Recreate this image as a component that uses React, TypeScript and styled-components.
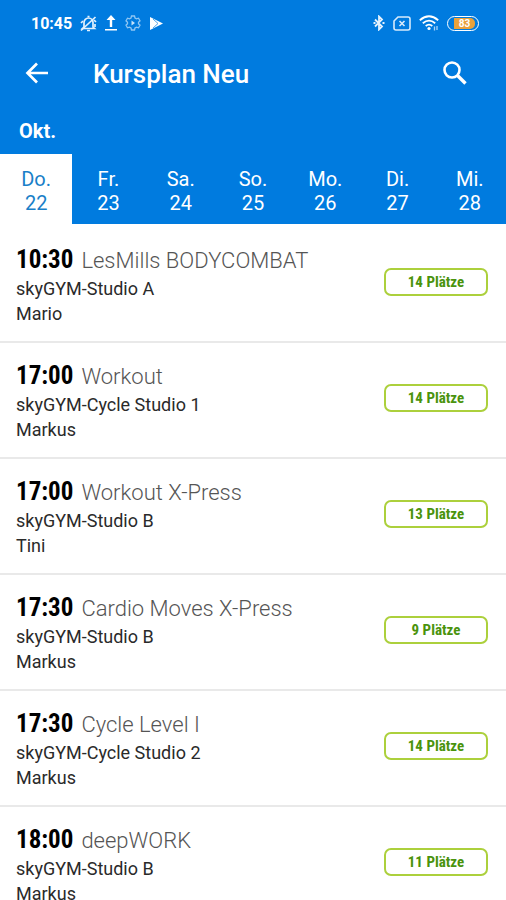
import React, { useState } from "react";
import styled, { createGlobalStyle } from "styled-components";

const blue = "#007bdf";

const GlobalStyle = createGlobalStyle`
  * { box-sizing: border-box; }
  html, body { margin: 0; height: 100%; overflow: hidden; background: #fff; }
  body { font-family: Roboto, "Liberation Sans", sans-serif; color: #2a2a2a; }
  #root { height: 100%; }
  button { font: inherit; border: 0; margin: 0; padding: 0; background: none; cursor: pointer; }
`;

const Screen = styled.div`
  height: 100vh;
  display: flex;
  flex-direction: column;
  overflow: hidden;
`;

const Header = styled.header`
  flex: none;
  background: ${blue};
  color: #fff;
`;

const StatusBar = styled.div`
  height: 44px;
  padding: 2px 27px 0 31px;
  display: flex;
  align-items: center;
  justify-content: space-between;
  font-size: 16px;
  font-weight: 700;
`;

const StatusGroup = styled.div`
  display: flex;
  align-items: center;
  gap: 8px;

  svg { display: block; }
`;

const TitleBar = styled.div`
  height: 60px;
  padding: 0 35px 0 21px;
  display: flex;
  align-items: center;
`;

const IconButton = styled.button`
  width: 32px;
  height: 32px;
  display: grid;
  place-items: center;
  color: #fff;

  svg { display: block; }
`;

const Title = styled.h1`
  flex: 1;
  margin: 0 0 0 40px;
  font-size: 26px;
  line-height: 32px;
  font-weight: 500;
`;

const Month = styled.div`
  height: 50px;
  padding: 15px 19px 0;
  font-size: 20px;
  line-height: 24px;
  font-weight: 700;
`;

const Days = styled.nav`
  display: grid;
  grid-template-columns: repeat(7, 1fr);
`;

const DayButton = styled.button<{ $active: boolean }>`
  && {
    height: 70px;
    padding-top: 3px;
    font-size: 20px;
    line-height: 24px;
    text-align: center;
    color: ${({ $active }) => ($active ? "#1a7fc8" : "#fff")};
    background: ${({ $active }) => ($active ? "#fff" : "transparent")};
  }

  span { display: block; }
`;

const CourseList = styled.ul`
  flex: 1;
  min-height: 0;
  margin: 0;
  padding: 3px 0 0;
  list-style: none;
  overflow-y: auto;
  scrollbar-width: none;
`;

const Course = styled.li`
  height: 116px;
  padding: 18px 18px 0 16px;
  display: flex;
  justify-content: space-between;
  border-bottom: 2px solid #e9e9e9;
`;

const Heading = styled.h2`
  margin: 0;
  display: flex;
  align-items: baseline;
  gap: 8px;
  font-size: 22px;
  line-height: 30px;
  font-weight: 300;
  color: #555;
`;

const Time = styled.time`
  font-family: "Roboto Condensed", Roboto, sans-serif;
  font-size: 25px;
  font-weight: 700;
  color: #000;
`;

const Detail = styled.p`
  margin: 0;
  font-size: 18px;
  line-height: 25px;
`;

const Places = styled.button`
  && {
    flex: none;
    width: 104px;
    height: 28px;
    margin-top: 23px;
    border: 2px solid #acd03c;
    border-radius: 7px;
    font-family: "Roboto Condensed", Roboto, sans-serif;
    font-size: 15px;
    line-height: 24px;
    font-weight: 700;
    color: #4a930c;
  }
`;

const MutedIcon = () => (
  <svg width="17" height="17" viewBox="0 0 17 17" fill="none" stroke="#e3f1fd" strokeWidth="1.7" aria-hidden="true">
    <path d="M4 12V7.500C4 5 6 3 8.500 3S13 5 13 7.500V12l1.500 1.500h-12z" />
    <path d="M7 15.500h3M7.500 1.500h2M1 15.500 15.500 2M1 8l2-2M14 5l2 2M15 9v3" />
  </svg>
);

const UploadIcon = () => (
  <svg width="12" height="16" viewBox="0 0 12 16" fill="#fff" aria-hidden="true">
    <path d="M6 0l4.500 5H7.200v7H4.800V5H1.500zM0 14h12v1.600H0z" />
  </svg>
);

const GearIcon = () => (
  <svg width="16" height="16" viewBox="0 0 16 16" fill="none" stroke="#8fc6f3" strokeWidth="1.300" aria-hidden="true">
    <path d="M6.500 1h3l.5 2 1.500.8 2-.6 1.500 2.600L13.500 7.200v1.600l1.500 1.400-1.500 2.600-2-.6-1.500.8-.5 2h-3l-.5-2-1.500-.8-2 .6L1 10.200l1.500-1.400V7.200L1 5.800l1.500-2.600 2 .6L6 3z" />
    <path d="M6.500 5.500L10 8l-3.500 2.500z" fill="#c6e3fa" stroke="none" />
  </svg>
);

const PlayIcon = () => (
  <svg width="15" height="15" viewBox="0 0 15 15" aria-hidden="true">
    <path d="M1 1l13 6.500L1 14z" fill="#fff" />
    <path d="M4 3l5 4.500L4 12" fill="none" stroke="#4ea5e9" strokeWidth="1" />
  </svg>
);

const BluetoothIcon = () => (
  <svg width="12" height="16" viewBox="0 0 12 16" fill="none" stroke="#e5f2fd" strokeWidth="1.800" aria-hidden="true">
    <path d="M2 4.500l7 7L6 14.500v-13l3 3-7 7" />
    <path d="M.5 8h2M9.500 8h2" />
  </svg>
);

const NoSimIcon = () => (
  <svg width="18" height="15" viewBox="0 0 18 15" fill="none" stroke="#d8ebfb" strokeWidth="1.600" aria-hidden="true">
    <path d="M5 1h10q2 0 2 2v9q0 2-2 2H3q-2 0-2-2V5z" />
    <path d="M6.500 5l5 5M11.500 5l-5 5" />
  </svg>
);

const WifiIcon = () => (
  <svg width="20" height="16" viewBox="0 0 20 16" fill="none" stroke="#fff" strokeWidth="1.800" aria-hidden="true">
    <path d="M.8 5.200Q10-2.600 19.200 5.200M3.800 8.200Q10 3 16.200 8.200M6.700 11Q10 8.200 13.300 11" />
    <circle cx="10" cy="13.500" r="1.600" fill="#fff" stroke="none" />
    <path d="M15.500 11.500v4M18 11v4" strokeWidth="1.300" stroke="#a9d4f7" />
  </svg>
);

const Battery = styled.span`
  width: 32px;
  height: 15px;
  padding: 1px 3px 1px 6px;
  display: block;
  border: 1px solid #fff;
  border-radius: 8px;
  font-size: 10px;
  line-height: 11px;
  text-align: center;

  span {
    display: block;
    background: #e9a13b;
    border-radius: 0 5px 5px 0;
  }
`;

const BackIcon = () => (
  <svg width="24" height="24" viewBox="0 0 24 24" fill="none" stroke="currentColor" strokeWidth="2.700" aria-hidden="true">
    <path d="M23 11H3M12 1.500L2.500 11l9.500 9.500" />
  </svg>
);

const SearchIcon = () => (
  <svg width="26" height="26" viewBox="0 0 26 26" fill="none" stroke="currentColor" aria-hidden="true">
    <circle cx="10" cy="9" r="7.500" strokeWidth="2.600" />
    <path d="M15.500 14.500l8 8" strokeWidth="3.400" />
  </svg>
);

const days = [
  ["Do.", "22"],
  ["Fr.", "23"],
  ["Sa.", "24"],
  ["So.", "25"],
  ["Mo.", "26"],
  ["Di.", "27"],
  ["Mi.", "28"],
];

const courses = [
  { time: "10:30", name: "LesMills BODYCOMBAT", room: "skyGYM-Studio A", coach: "Mario", places: 14 },
  { time: "17:00", name: "Workout", room: "skyGYM-Cycle Studio 1", coach: "Markus", places: 14 },
  { time: "17:00", name: "Workout X-Press", room: "skyGYM-Studio B", coach: "Tini", places: 13 },
  { time: "17:30", name: "Cardio Moves X-Press", room: "skyGYM-Studio B", coach: "Markus", places: 9 },
  { time: "17:30", name: "Cycle Level I", room: "skyGYM-Cycle Studio 2", coach: "Markus", places: 14 },
  { time: "18:00", name: "deepWORK", room: "skyGYM-Studio B", coach: "Markus", places: 11 },
];

export default function App() {
  const [selected, setSelected] = useState("22");

  return (
    <Screen>
      <GlobalStyle />
      <Header>
        <StatusBar>
          <StatusGroup>
            <span>10:45</span>
            <MutedIcon />
            <UploadIcon />
            <GearIcon />
            <PlayIcon />
          </StatusGroup>
          <StatusGroup>
            <BluetoothIcon />
            <NoSimIcon />
            <WifiIcon />
            <Battery><span>83</span></Battery>
          </StatusGroup>
        </StatusBar>
        <TitleBar>
          <IconButton aria-label="Zurück"><BackIcon /></IconButton>
          <Title>Kursplan Neu</Title>
          <IconButton aria-label="Suchen"><SearchIcon /></IconButton>
        </TitleBar>
        <Month>Okt.</Month>
        <Days aria-label="Tage">
          {days.map(([name, date]) => (
            <DayButton
              key={date}
              $active={date === selected}
              aria-pressed={date === selected}
              onClick={() => setSelected(date)}
            >
              <span>{name}</span>
              <span>{date}</span>
            </DayButton>
          ))}
        </Days>
      </Header>
      <CourseList>
        {courses.map((course) => (
          <Course key={course.time + course.name}>
            <div>
              <Heading>
                <Time>{course.time}</Time>
                {course.name}
              </Heading>
              <Detail>{course.room}</Detail>
              <Detail>{course.coach}</Detail>
            </div>
            <Places>{course.places} Plätze</Places>
          </Course>
        ))}
      </CourseList>
    </Screen>
  );
}
